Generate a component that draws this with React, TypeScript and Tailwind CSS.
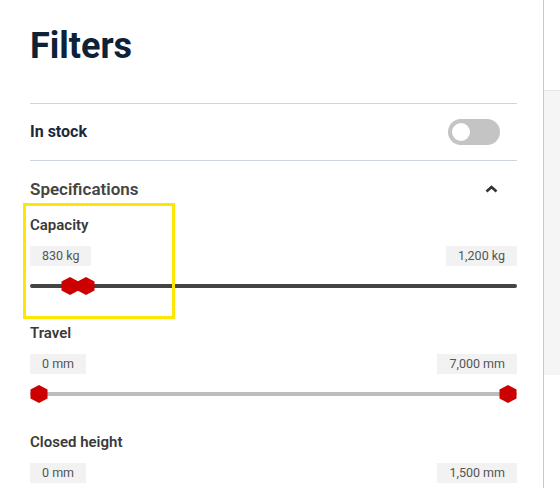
import { ReactNode } from 'react'

const font = { fontFamily: 'Roboto, "Noto Sans", sans-serif' }

function Hex({ className = '' }: { className?: string }) {
  return (
    <svg className={className} width="18" height="18" viewBox="0 0 18 18">
      <polygon points="9,0 17.5,4.5 17.5,13.5 9,18 0.5,13.5 0.5,4.5" fill="#cc0000" />
    </svg>
  )
}

function ValueBox({ children }: { children: ReactNode }) {
  return (
    <div className="h-5 px-3 bg-[#f2f2f2] text-[12.5px] leading-5 text-[#555]">{children}</div>
  )
}

function RangeFilter({
  label,
  min,
  max,
  track,
  thumbs,
}: {
  label: string
  min: string
  max: string
  track: string
  thumbs: ReactNode
}) {
  return (
    <div>
      <div className="text-[15px] leading-5 font-semibold text-[#3a3a3a]">{label}</div>
      <div className="mt-[11px] flex justify-between">
        <ValueBox>{min}</ValueBox>
        <ValueBox>{max}</ValueBox>
      </div>
      <div className="relative mt-[11px] h-[18px] flex items-center">
        <div className={`w-full h-1 rounded-full ${track}`} />
        {thumbs}
      </div>
    </div>
  )
}

export default function App() {
  return (
    <div className="h-[488px] overflow-hidden flex bg-white" style={font}>
      <div className="relative w-[544px] shrink-0 border-r border-[#c9c9c9] pl-[30px] pr-[26px] pt-6">
        <h1 className="text-[36px] leading-[44px] font-bold text-[#0d2237]">Filters</h1>

        <div className="mt-[35px] border-t border-[#cfd5dc] h-[57px] flex items-center justify-between">
          <span className="text-[16px] font-bold text-[#1b2a3a]">In stock</span>
          <div className="mr-[17px] w-[52px] h-[26px] rounded-full bg-[#c4c4c4] flex items-center pl-1">
            <div className="w-[18px] h-[18px] rounded-full bg-white" />
          </div>
        </div>

        <div className="border-t border-[#cfd5dc] pt-4">
          <div className="flex items-center justify-between">
            <span className="text-[17px] leading-6 font-semibold text-[#444]">Specifications</span>
            <svg className="mr-[19px]" width="13" height="8" viewBox="0 0 13 8">
              <path d="M1.5 6.5 L6.5 2 L11.5 6.5" fill="none" stroke="#333" strokeWidth="2.6" />
            </svg>
          </div>

          <div className="mt-[14px]">
            <RangeFilter
              label="Capacity"
              min="830 kg"
              max="1,200 kg"
              track="bg-[#444]"
              thumbs={
                <>
                  <Hex className="absolute left-[31px] top-0" />
                  <Hex className="absolute left-[47px] top-0" />
                </>
              }
            />
          </div>

          <div className="mt-7">
            <RangeFilter
              label="Travel"
              min="0 mm"
              max="7,000 mm"
              track="bg-[#bdbdbd]"
              thumbs={
                <>
                  <Hex className="absolute left-0 top-0" />
                  <Hex className="absolute right-0 top-0" />
                </>
              }
            />
          </div>

          <div className="mt-[29px]">
            <RangeFilter
              label="Closed height"
              min="0 mm"
              max="1,500 mm"
              track="bg-[#bdbdbd]"
              thumbs={
                <>
                  <Hex className="absolute left-0 top-0" />
                  <Hex className="absolute right-0 top-0" />
                </>
              }
            />
          </div>
        </div>

        <div className="absolute left-[23px] top-[203px] w-[152px] h-[116px] border-[3px] border-[#ffe600] pointer-events-none" />
      </div>

      <div className="flex-1 pt-[90px]">
        <div className="h-[285px] bg-[#f5f5f5] border-t border-[#e6e6e6]" />
      </div>
    </div>
  )
}
